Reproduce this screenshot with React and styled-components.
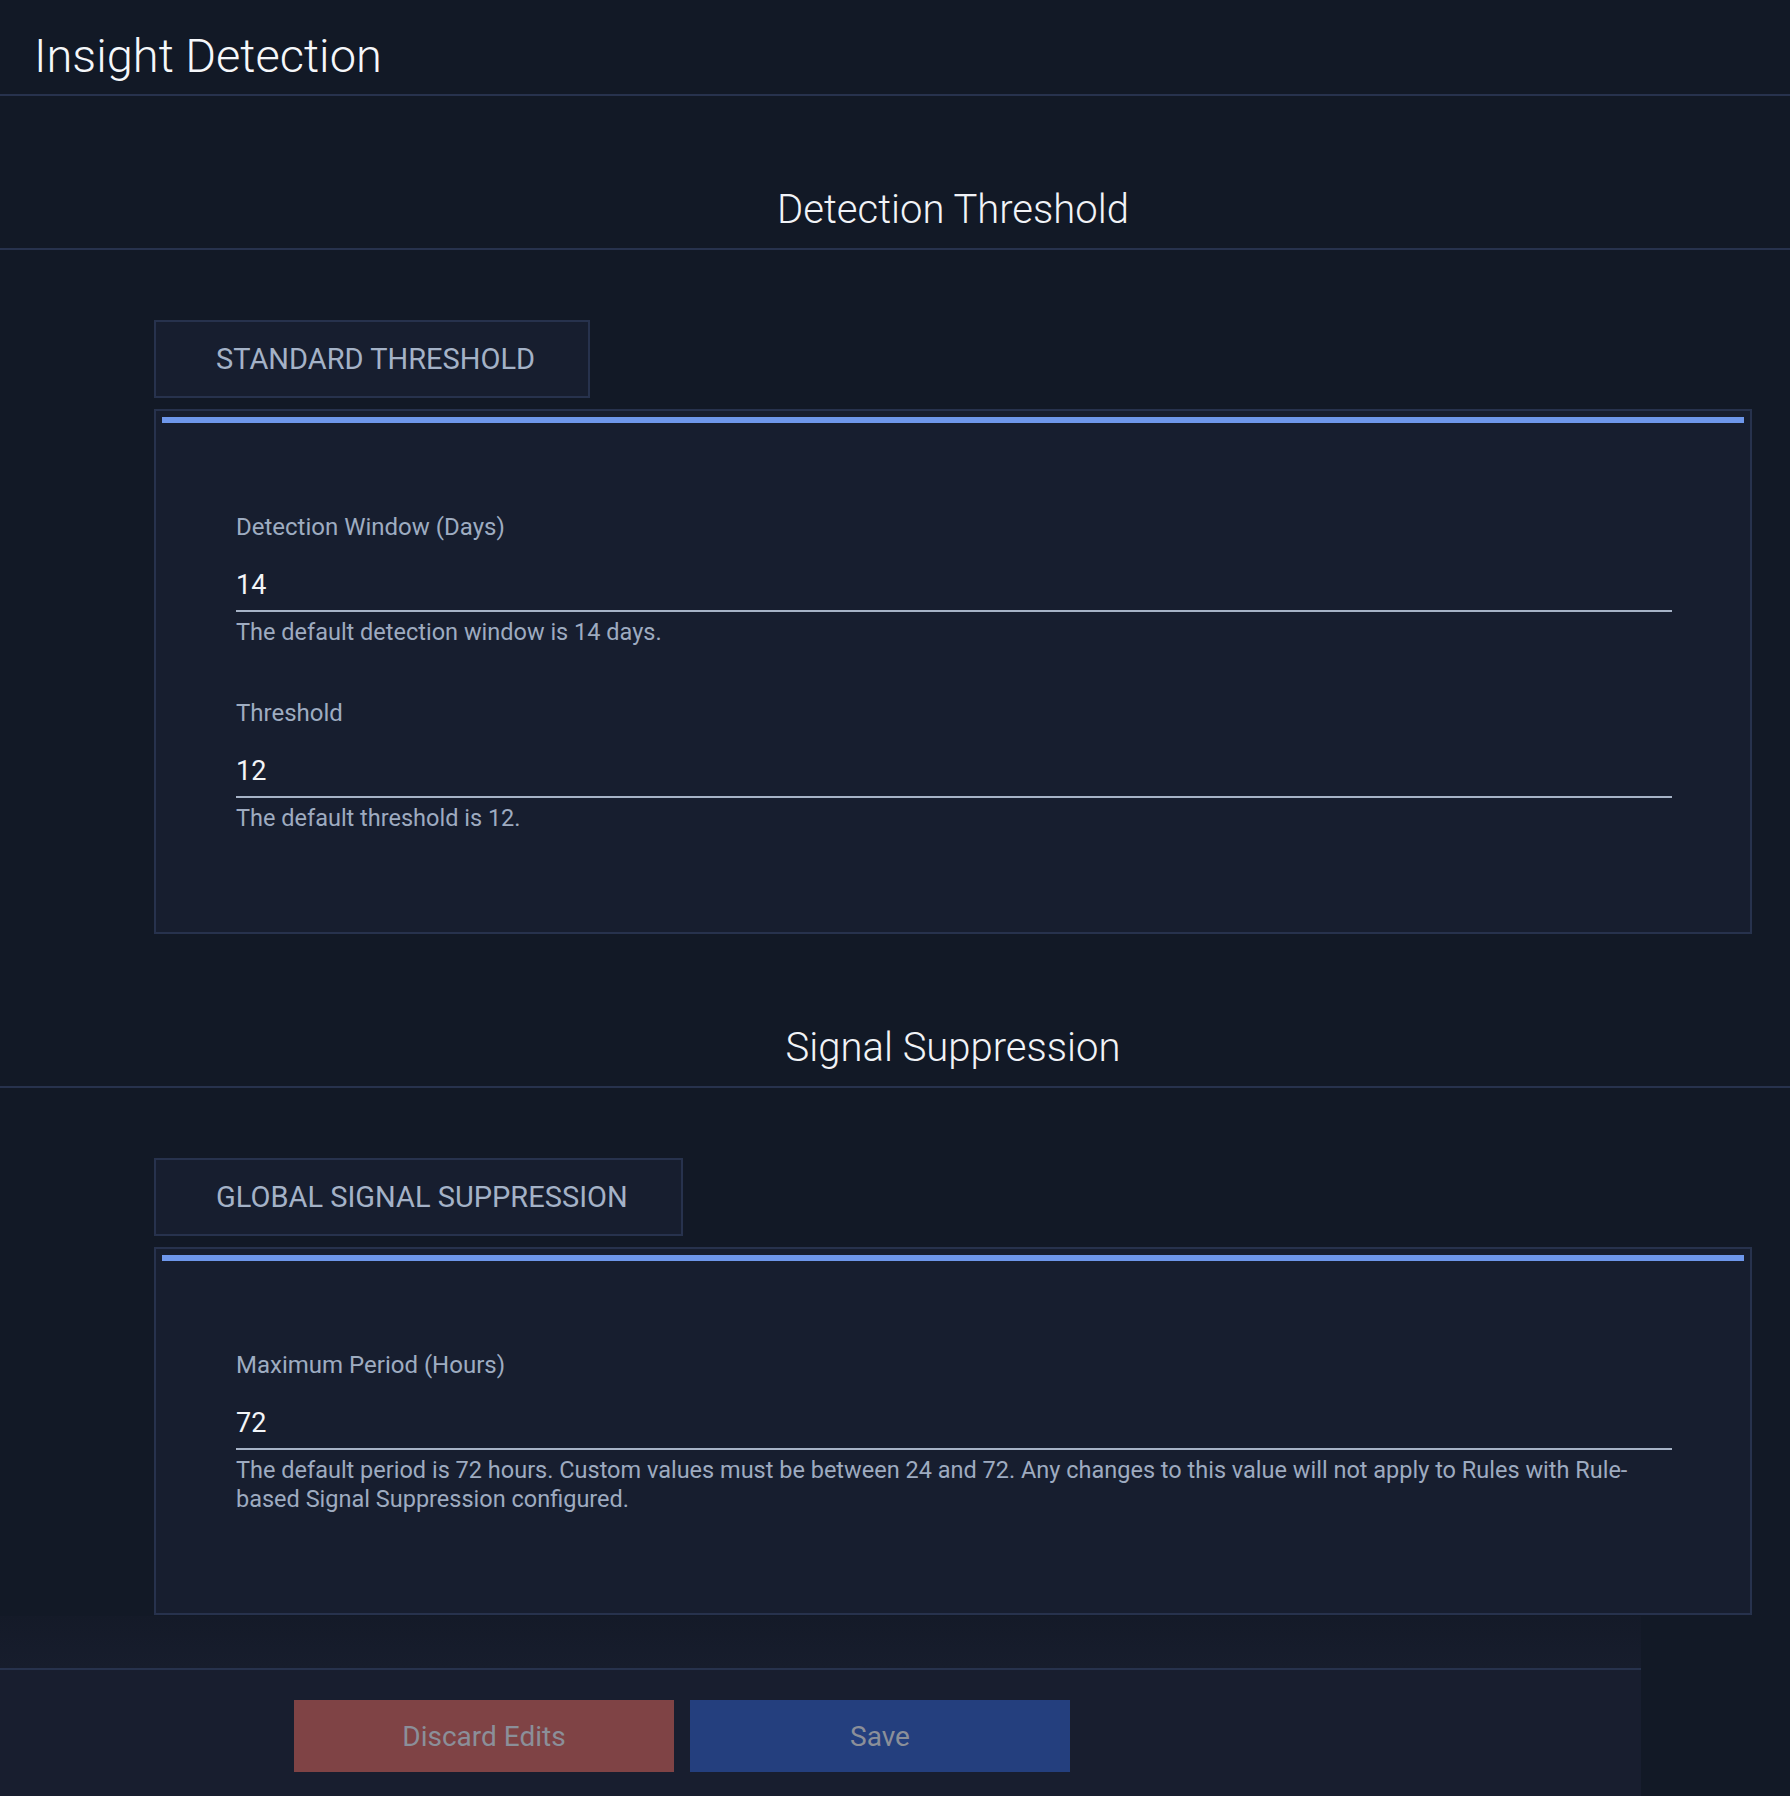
import styled, { createGlobalStyle } from "styled-components";

const GlobalStyle = createGlobalStyle`
  html, body {
    margin: 0;
    padding: 0;
    background: #121926;
    font-family: Roboto, "Liberation Sans", Arial, sans-serif;
  }
  * {
    box-sizing: border-box;
  }
`;

const Page = styled.div`
  min-height: 100vh;
  background: #121926;
  display: flex;
  flex-direction: column;
`;

const Header = styled.header`
  height: 96px;
  padding: 29px 0 0 34px;
  border-bottom: 2px solid #27324d;
`;

const Title = styled.h1`
  margin: 0;
  font-size: 47px;
  line-height: 54px;
  font-weight: 300;
  color: #f5f7fa;
`;

const SectionTitle = styled.h2`
  margin: 0;
  padding: 90px 38px 14px 154px;
  border-bottom: 2px solid #27324d;
  text-align: center;
  font-size: 40px;
  line-height: 48px;
  font-weight: 300;
  color: #f1f3f7;
`;

const SectionBody = styled.div`
  padding: 70px 38px 0 154px;
`;

const Tab = styled.div`
  display: inline-flex;
  align-items: center;
  height: 78px;
  padding: 0 53px 0 60px;
  border: 2px solid #27324d;
  background: #171e2f;
  color: #a4b2c7;
  font-size: 29px;
  text-transform: uppercase;
  margin-bottom: 11px;
`;

const Card = styled.div`
  border: 2px solid #27324d;
  background: #171e2f;
  padding: 6px;
`;

const AccentBar = styled.div`
  height: 6px;
  background: #6e97eb;
`;

const Fields = styled.div`
  display: flex;
  flex-direction: column;
  gap: 52px;
  padding: 90px 72px 93px 74px;
`;

const Field = styled.div`
  display: flex;
  flex-direction: column;
`;

const Label = styled.label`
  font-size: 24px;
  line-height: 28px;
  color: #9eacc1;
`;

const ValueInput = styled.input`
  margin-top: 28px;
  padding: 0 0 9px;
  border: none;
  border-bottom: 2px solid #a6b3c7;
  background: transparent;
  color: #f3f5f8;
  font-family: inherit;
  font-size: 27px;
  line-height: 32px;
  height: 43px;
  outline: none;
`;

const Helper = styled.p`
  margin: 6px 0 0;
  font-size: 23.5px;
  line-height: 29px;
  color: #9eabc0;
`;

const FooterWrap = styled.div`
  width: 1641px;
  margin-top: auto;
`;

const Fade = styled.div`
  height: 52px;
  background: linear-gradient(to bottom, #141a28, #171d2d);
`;

const FooterBar = styled.footer`
  height: 128px;
  border-top: 2px solid #27324d;
  background: #181e2f;
  display: flex;
  gap: 16px;
  padding: 30px 0 0 294px;
`;

const Button = styled.button`
  width: 380px;
  height: 72px;
  border: none;
  background: ${(p) => (p.$variant === "danger" ? "#7f4345" : "#243f7e")};
  color: #8b8f99;
  font-family: inherit;
  font-size: 28px;
  cursor: not-allowed;
`;

function FormField({ label, value, help }) {
  return (
    <Field>
      <Label>{label}</Label>
      <ValueInput defaultValue={value} />
      <Helper>{help}</Helper>
    </Field>
  );
}

function Section({ title, tab, children }) {
  return (
    <>
      <SectionTitle>{title}</SectionTitle>
      <SectionBody>
        <Tab>{tab}</Tab>
        <Card>
          <AccentBar />
          <Fields>{children}</Fields>
        </Card>
      </SectionBody>
    </>
  );
}

export default function App() {
  return (
    <>
      <GlobalStyle />
      <Page>
        <Header>
          <Title>Insight Detection</Title>
        </Header>
        <Section title="Detection Threshold" tab="Standard Threshold">
          <FormField
            label="Detection Window (Days)"
            value="14"
            help="The default detection window is 14 days."
          />
          <FormField
            label="Threshold"
            value="12"
            help="The default threshold is 12."
          />
        </Section>
        <Section title="Signal Suppression" tab="Global Signal Suppression">
          <FormField
            label="Maximum Period (Hours)"
            value="72"
            help={
              <>
                The default period is 72 hours. Custom values must be between 24
                and 72. Any changes to this value will not apply to Rules with
                Rule-
                <br />
                based Signal Suppression configured.
              </>
            }
          />
        </Section>
        <FooterWrap>
          <Fade />
          <FooterBar>
            <Button $variant="danger">Discard Edits</Button>
            <Button>Save</Button>
          </FooterBar>
        </FooterWrap>
      </Page>
    </>
  );
}
